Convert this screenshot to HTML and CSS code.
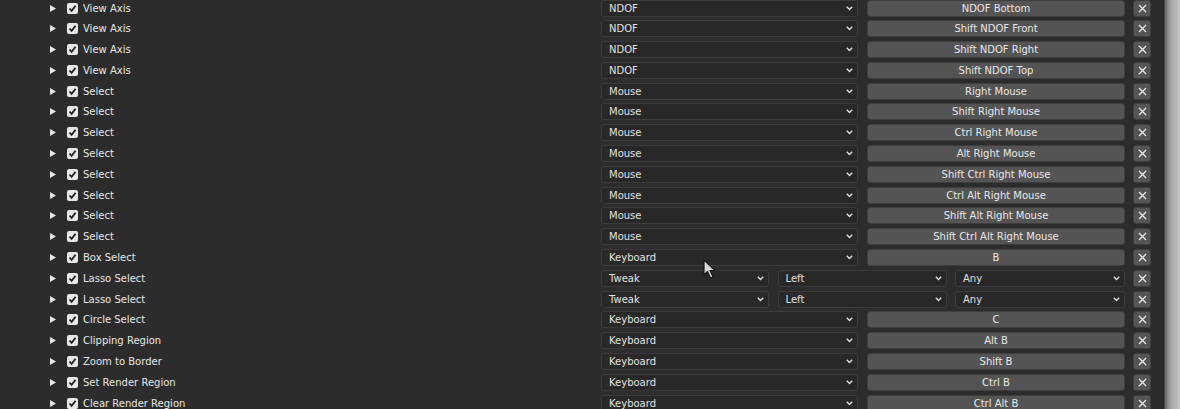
FILE: index.html
```html
<!DOCTYPE html>
<html>
<head>
<meta charset="utf-8">
<link rel="stylesheet" href="styles.css">
</head>
<body>
<div class="page">
  <div class="list" id="list"></div>
  <div class="edge"></div>
</div>
<svg class="cursor" width="16" height="22" viewBox="0 0 16 22"><path d="M1 1 L1 16 L4.5 12.5 L7.5 19 L10 18 L7 11.5 L12 11.5 Z" fill="#d8d8d8" stroke="#1a1a1a" stroke-width="1.2" stroke-linejoin="round"/></svg>
<script src="app.js"></script>
</body>
</html>
```
FILE: app.js
```js
const rows = [
  ["View Axis","NDOF","NDOF Bottom"],
  ["View Axis","NDOF","Shift NDOF Front"],
  ["View Axis","NDOF","Shift NDOF Right"],
  ["View Axis","NDOF","Shift NDOF Top"],
  ["Select","Mouse","Right Mouse"],
  ["Select","Mouse","Shift Right Mouse"],
  ["Select","Mouse","Ctrl Right Mouse"],
  ["Select","Mouse","Alt Right Mouse"],
  ["Select","Mouse","Shift Ctrl Right Mouse"],
  ["Select","Mouse","Ctrl Alt Right Mouse"],
  ["Select","Mouse","Shift Alt Right Mouse"],
  ["Select","Mouse","Shift Ctrl Alt Right Mouse"],
  ["Box Select","Keyboard","B"],
  ["Lasso Select","Tweak","Left","Any"],
  ["Lasso Select","Tweak","Left","Any"],
  ["Circle Select","Keyboard","C"],
  ["Clipping Region","Keyboard","Alt B"],
  ["Zoom to Border","Keyboard","Shift B"],
  ["Set Render Region","Keyboard","Ctrl B"],
  ["Clear Render Region","Keyboard","Ctrl Alt B"]
];
const chev = '<svg class="chev" width="7" height="5" viewBox="0 0 7 5"><polyline points="0.8,0.8 3.5,3.6 6.2,0.8" fill="none" stroke="#e0e0e0" stroke-width="1.4"/></svg>';
const tri = '<svg class="tri" width="6" height="7" viewBox="0 0 6 7"><polygon points="0,0 6,3.5 0,7" fill="#e6e6e6"/></svg>';
const check = '<span class="check"><svg width="9" height="9" viewBox="0 0 9 9"><polyline points="1.5,4.5 3.6,6.8 7.6,1.8" fill="none" stroke="#1e1e1e" stroke-width="1.8"/></svg></span>';
const xicon = '<svg width="9" height="9" viewBox="0 0 9 9"><path d="M1 1 L8 8 M8 1 L1 8" stroke="#e8e8e8" stroke-width="1.3"/></svg>';
function dd(t){ return '<div class="dd"><span>'+t+'</span>'+chev+'</div>'; }
const list = document.getElementById('list');
let html = '';
for (const r of rows) {
  let inputs;
  if (r.length === 4) {
    inputs = '<div class="inputs three">'+dd(r[1])+dd(r[2])+dd(r[3])+'</div>';
  } else {
    inputs = '<div class="inputs two">'+dd(r[1])+'<div class="key">'+r[2]+'</div></div>';
  }
  html += '<div class="row"><div class="name">'+tri+check+'<span class="label">'+r[0]+'</span></div>'+inputs+'<div class="xbtn">'+xicon+'</div></div>';
}
list.innerHTML = html;
```
FILE: styles.css
```css
html, body {
  margin: 0;
  padding: 0;
  background: #2c2c2c;
  overflow: hidden;
  width: 1180px;
  height: 409px;
}
body {
  font-family: "DejaVu Sans", "Liberation Sans", sans-serif;
  font-size: 10px;
  color: #e6e6e6;
}
.page {
  display: flex;
  height: 409px;
}
.list {
  width: 1162px;
  flex: none;
  margin-top: -2.4px;
}
.edge {
  flex: 1;
  background: linear-gradient(to right, #2a2a2a 0, #2a2a2a 2px, #6a6a6a 3px, #a5a5a5 9px, #c4c4c4 18px);
}
.row {
  height: 20.8px;
  display: flex;
  align-items: center;
}
.name {
  width: 601px;
  flex: none;
  display: flex;
  align-items: center;
}
.tri {
  margin-left: 50px;
  flex: none;
}
.check {
  margin-left: 11px;
  width: 11px;
  height: 11px;
  border-radius: 2px;
  background: #e8e8e8;
  display: flex;
  align-items: center;
  justify-content: center;
  flex: none;
}
.label {
  margin-left: 5px;
  white-space: nowrap;
}
.inputs {
  width: 524px;
  flex: none;
  display: grid;
  column-gap: 9px;
}
.inputs.two { grid-template-columns: 257px 258px; }
.inputs.three { grid-template-columns: 168px 169px 170px; column-gap: 8.5px; }
.dd {
  height: 17px;
  box-sizing: border-box;
  background: #282828;
  border: 1px solid #3b3b3b;
  border-radius: 3px;
  display: flex;
  align-items: center;
  justify-content: space-between;
  padding: 0 4px 0 7px;
  color: #e2e2e2;
}
.key {
  height: 17px;
  box-sizing: border-box;
  background: #545454;
  border: 1px solid #3e3e3e;
  border-radius: 3px;
  display: flex;
  align-items: center;
  justify-content: center;
  color: #e8e8e8;
  white-space: nowrap;
}
.xbtn {
  margin-left: 8px;
  width: 18px;
  height: 17px;
  box-sizing: border-box;
  background: #555555;
  border: 1px solid #3e3e3e;
  border-radius: 3px;
  display: flex;
  align-items: center;
  justify-content: center;
  flex: none;
}
.cursor {
  position: absolute;
  left: 703px;
  top: 259px;
}
```
